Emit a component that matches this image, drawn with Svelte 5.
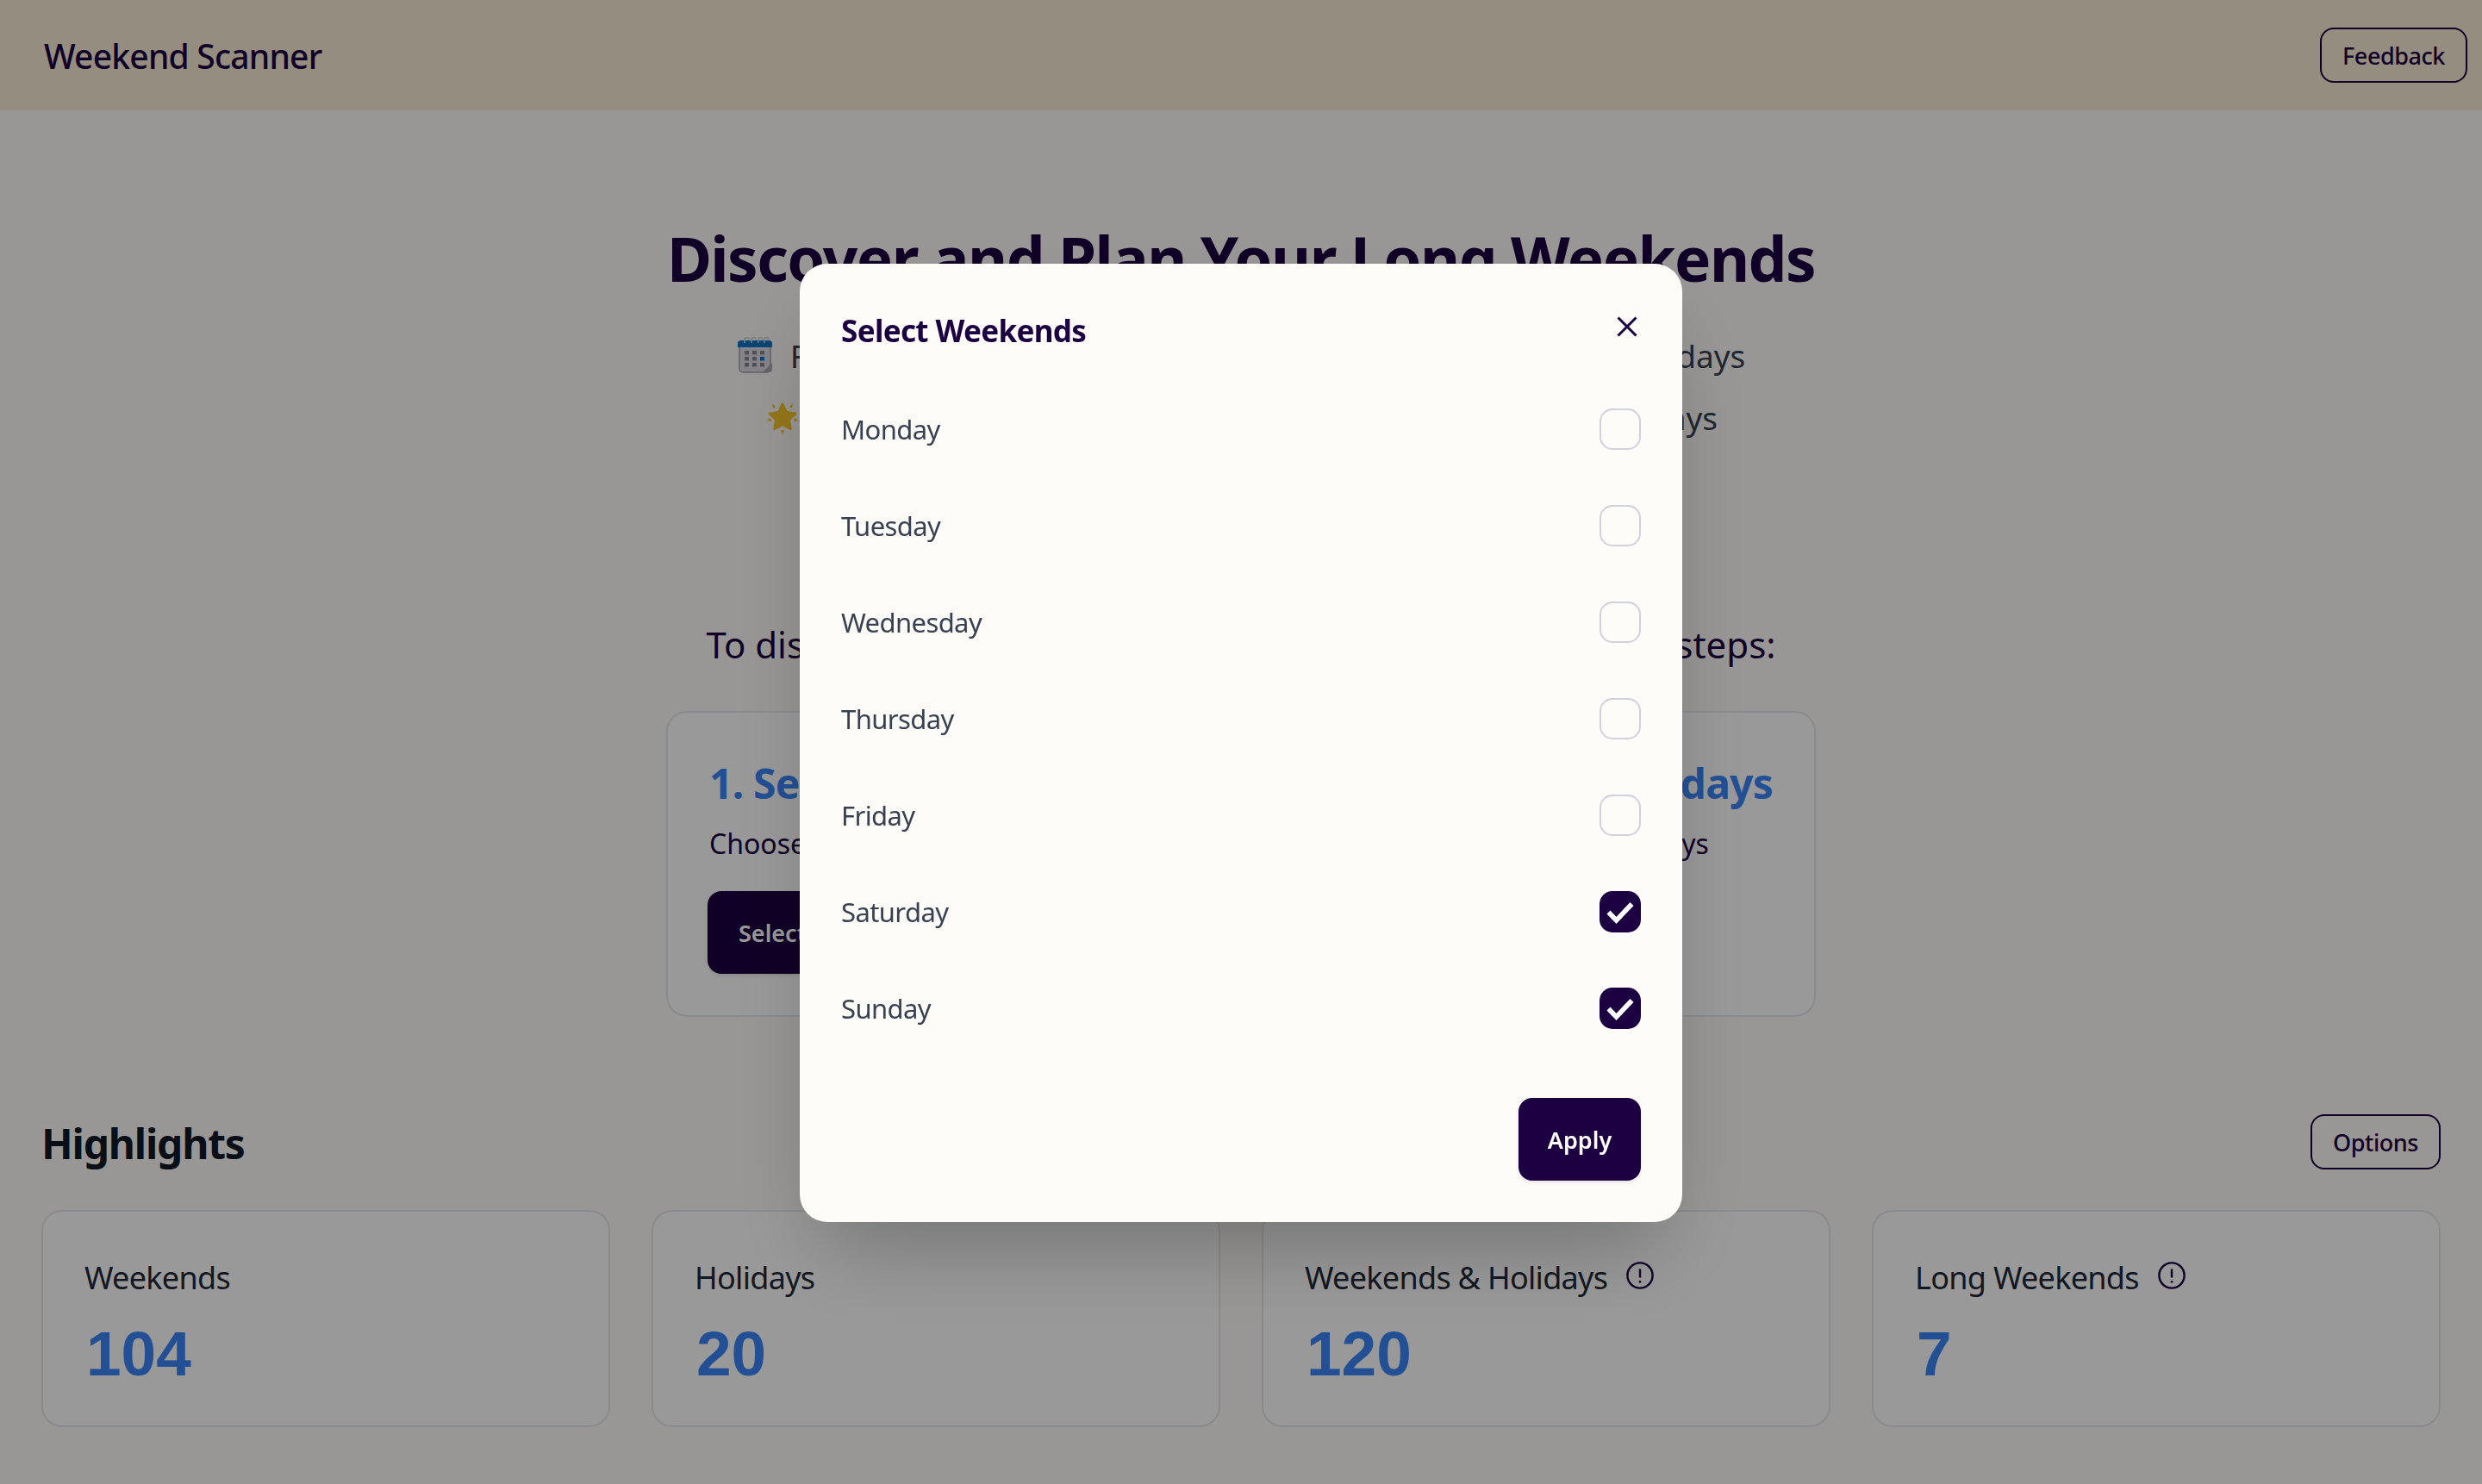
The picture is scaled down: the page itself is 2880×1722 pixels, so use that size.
<script>
  const days = [
    { name: 'Monday', on: false }, { name: 'Tuesday', on: false }, { name: 'Wednesday', on: false },
    { name: 'Thursday', on: false }, { name: 'Friday', on: false }, { name: 'Saturday', on: true }, { name: 'Sunday', on: true }
  ];
  const stats = [
    { label: 'Weekends', value: 104, info: false }, { label: 'Holidays', value: 20, info: false },
    { label: 'Weekends & Holidays', value: 120, info: true }, { label: 'Long Weekends', value: 7, info: true }
  ];
</script>

<div class="page">
  <header class="top">
    <div class="logo">Weekend Scanner</div>
    <button class="outline">Feedback</button>
  </header>

  <section class="hero">
    <h1>Discover and Plan Your Long Weekends</h1>
    <p class="sub line1">
      <svg class="emoji" viewBox="0 0 42 42">
        <path d="M3 9h36v28a4 4 0 0 1-4 4H7a4 4 0 0 1-4-4z" fill="#dcdce4" stroke="#a0a0aa" stroke-width="1.5"/>
        <path d="M1 12V8a4 4 0 0 1 4-4h32a4 4 0 0 1 4 4v4z" fill="#0a74c4"/>
        <g fill="none" stroke="#d0d0d8" stroke-width="1.6"><path d="M9 7V3a2.5 2.5 0 0 1 5 0"/><path d="M17 7V3a2.5 2.5 0 0 1 5 0"/><path d="M25 7V3a2.5 2.5 0 0 1 5 0"/><path d="M32 7V3a2.5 2.5 0 0 1 5 0"/></g>
        <g fill="#8a8590"><rect x="9" y="16" width="5" height="4.5"/><rect x="18" y="16" width="5" height="4.5"/><rect x="27" y="16" width="5" height="4.5"/><rect x="9" y="23" width="5" height="4.5"/><rect x="18" y="23" width="5" height="4.5"/><rect x="9" y="30" width="5" height="4.5"/><rect x="18" y="30" width="5" height="4.5"/><rect x="27" y="30" width="5" height="4.5"/></g>
        <rect x="27" y="23" width="5" height="4.5" fill="#0a74c4"/>
        <path d="M41 30v7a4 4 0 0 1-4 4h-7z" fill="#a8a6b0"/>
      </svg>
      <span>Find all of your upcoming long weekends and all public holidays</span>
    </p>
    <p class="sub">
      <svg class="emoji star" viewBox="0 0 42 42">
        <path d="M21 6l4.6 9.6 10.4 1.4-7.6 7.2 2 10.4-9.4-5-9.4 5 2-10.4L6 17l10.4-1.4z" fill="#f9c52c" stroke="#f9c52c" stroke-width="3" stroke-linejoin="round"/>
        <g fill="#f9c52c"><path d="M19 36h4l-2 6z"/><path d="M2 25l5-3 1 4z"/><path d="M40 25l-5-3-1 4z"/><path d="M9 5l4 4-3 2z"/><path d="M33 5l-4 4 3 2z"/></g>
      </svg>
      <span>Make the most of all of your time off with extended holidays</span>
    </p>

    <h2 class="lead">To discover your long weekends, please follow these two steps:</h2>
    <div class="steps">
      <div class="card step">
        <h3>1. Select Weekends</h3>
        <p>Choose your weekend days</p>
        <button class="solid">Select Weekends</button>
      </div>
      <div class="card step">
        <h3>2. Choose Your Holidays</h3>
        <p>Choose all your annual holidays</p>
      </div>
    </div>
  </section>

  <section class="high">
    <div class="high-head">
      <h2>Highlights</h2>
      <button class="outline">Options</button>
    </div>
    <div class="stats">
      {#each stats as s}
        <div class="card stat">
          <div class="label">
            <span>{s.label}</span>
            {#if s.info}
              <svg class="info" viewBox="0 0 32 32"><circle cx="16" cy="16" r="14.6" fill="none" stroke="#1c0041" stroke-width="2.4"/><path d="M16 8.5v10M16 22v2.4" stroke="#1c0041" stroke-width="2.4" fill="none"/></svg>
            {/if}
          </div>
          <div class="value">{s.value}</div>
        </div>
      {/each}
    </div>
  </section>
</div>

<div class="overlay">
  <div class="modal">
    <div class="modal-head">
      <h3>Select Weekends</h3>
      <svg class="close" viewBox="0 0 24 24"><path d="M1.5 1.5l21 21M22.5 1.5l-21 21" stroke="#1c0041" stroke-width="3" fill="none"/></svg>
    </div>
    <div class="rows">
      {#each days as d}
        <div class="row">
          <span>{d.name}</span>
          {#if d.on}
            <span class="box on"><svg viewBox="0 0 48 48"><path d="M10.5 24.5l9 9.5 18-19" fill="none" stroke="#fff" stroke-width="5.5"/></svg></span>
          {:else}
            <span class="box"></span>
          {/if}
        </div>
      {/each}
    </div>
    <div class="foot"><button class="solid apply">Apply</button></div>
  </div>
</div>

<style>
  :global(body) { margin: 0; background: #fdfcf8; font-family: "Noto Sans", "Open Sans", sans-serif; }
  .page { height: 1722px; overflow: hidden; }
  h1, h2, h3, p { margin: 0; }
  button { font-family: inherit; cursor: pointer; }
  .top { height: 128px; box-sizing: border-box; background: #f8ebd6; display: flex; align-items: center; justify-content: space-between; padding: 0 17px 0 51px; }
  .logo { font-size: 39px; font-weight: 500; color: #1c0041; letter-spacing: -0.8px; }
  .outline { height: 64px; box-sizing: border-box; padding: 0 24px; background: transparent; border: 2px solid #1c0041; border-radius: 16px; color: #1c0041; font-size: 27px; font-weight: 500; letter-spacing: -0.45px; }
  .hero { display: flex; flex-direction: column; align-items: center; padding-top: 127px; }
  h1 { font-size: 71px; line-height: 90px; font-weight: 700; color: #1c0041; letter-spacing: -1.5px; white-space: nowrap; }
  .sub { display: flex; align-items: center; height: 72px; font-size: 37px; color: #374151; white-space: nowrap; }
  .line1 { margin-top: 31px; }
  .emoji { width: 42px; height: 42px; margin-right: 20px; flex: none; }
  .lead { margin-top: 196px; font-size: 42px; line-height: 64px; font-weight: 400; color: #1c0041; white-space: nowrap; }
  .steps { margin-top: 45px; width: 1334px; display: grid; grid-template-columns: 1fr 1fr; gap: 48px; }
  .card { box-sizing: border-box; border: 2px solid #e5e7eb; border-radius: 24px; background: #fff; }
  .step { height: 355px; padding: 50px 48px 48px; }
  h3 { font-size: 48px; line-height: 64px; font-weight: 700; color: #3b85f8; }
  .step h3 { letter-spacing: -0.8px; white-space: nowrap; }
  .step p { margin-top: 14px; font-size: 32px; line-height: 48px; color: #1c0041; white-space: nowrap; }
  .solid { height: 96px; border: none; border-radius: 16px; background: #1c0041; color: #fff; font-size: 27px; font-weight: 600; padding: 0 36px; box-shadow: 0 2px 4px rgba(0,0,0,.1); }
  .step .solid { margin-top: 31px; margin-left: -2px; }
  .high { padding: 0 48px; margin-top: 113px; }
  .high-head { display: flex; justify-content: space-between; align-items: center; height: 64px; }
  .high-head h2 { font-size: 48px; font-weight: 700; color: #111827; letter-spacing: -1.2px; padding-top: 3px; }
  .stats { margin-top: 47px; display: grid; grid-template-columns: repeat(4, 660px); gap: 48px; }
  .stat { height: 252px; padding: 52px 48px 0; }
  .label { display: flex; align-items: center; gap: 22px; height: 48px; font-size: 36px; color: #1f2937; letter-spacing: -0.7px; white-space: nowrap; }
  .info { width: 32px; height: 32px; flex: none; margin-top: -4px; }
  .value { margin-top: 25px; margin-left: 2px; font-family: "Liberation Sans", sans-serif; font-size: 73px; line-height: 80px; font-weight: 700; color: #3b85f8; }
  .overlay { position: fixed; inset: 0; background: rgba(0,0,0,.4); display: flex; align-items: center; justify-content: center; }
  .modal { width: 1024px; height: 1112px; margin-top: 2px; box-sizing: border-box; padding: 48px; border-radius: 32px; background: #fdfcf8; box-shadow: 0 50px 100px -24px rgba(0,0,0,.25); display: flex; flex-direction: column; }
  .modal-head { display: flex; justify-content: space-between; align-items: flex-start; height: 64px; }
  .modal-head h3 { font-size: 35px; line-height: 60px; font-weight: 700; color: #1c0041; letter-spacing: -0.64px; }
  .close { width: 24px; height: 24px; margin-top: 13px; margin-right: 4px; }
  .rows { margin-top: 56px; display: flex; flex-direction: column; gap: 64px; }
  .row { display: flex; align-items: center; justify-content: space-between; height: 48px; font-size: 31px; color: #374151; letter-spacing: -0.6px; }
  .box { box-sizing: border-box; width: 48px; height: 48px; border-radius: 15px; border: 2px solid #d1d1de; display: block; }
  .box.on { background: #1c0041; border: none; }
  .box svg { display: block; width: 48px; height: 48px; }
  .foot { margin-top: auto; display: flex; justify-content: flex-end; }
  .apply { height: 96px; width: 142px; padding: 0; }
</style>
